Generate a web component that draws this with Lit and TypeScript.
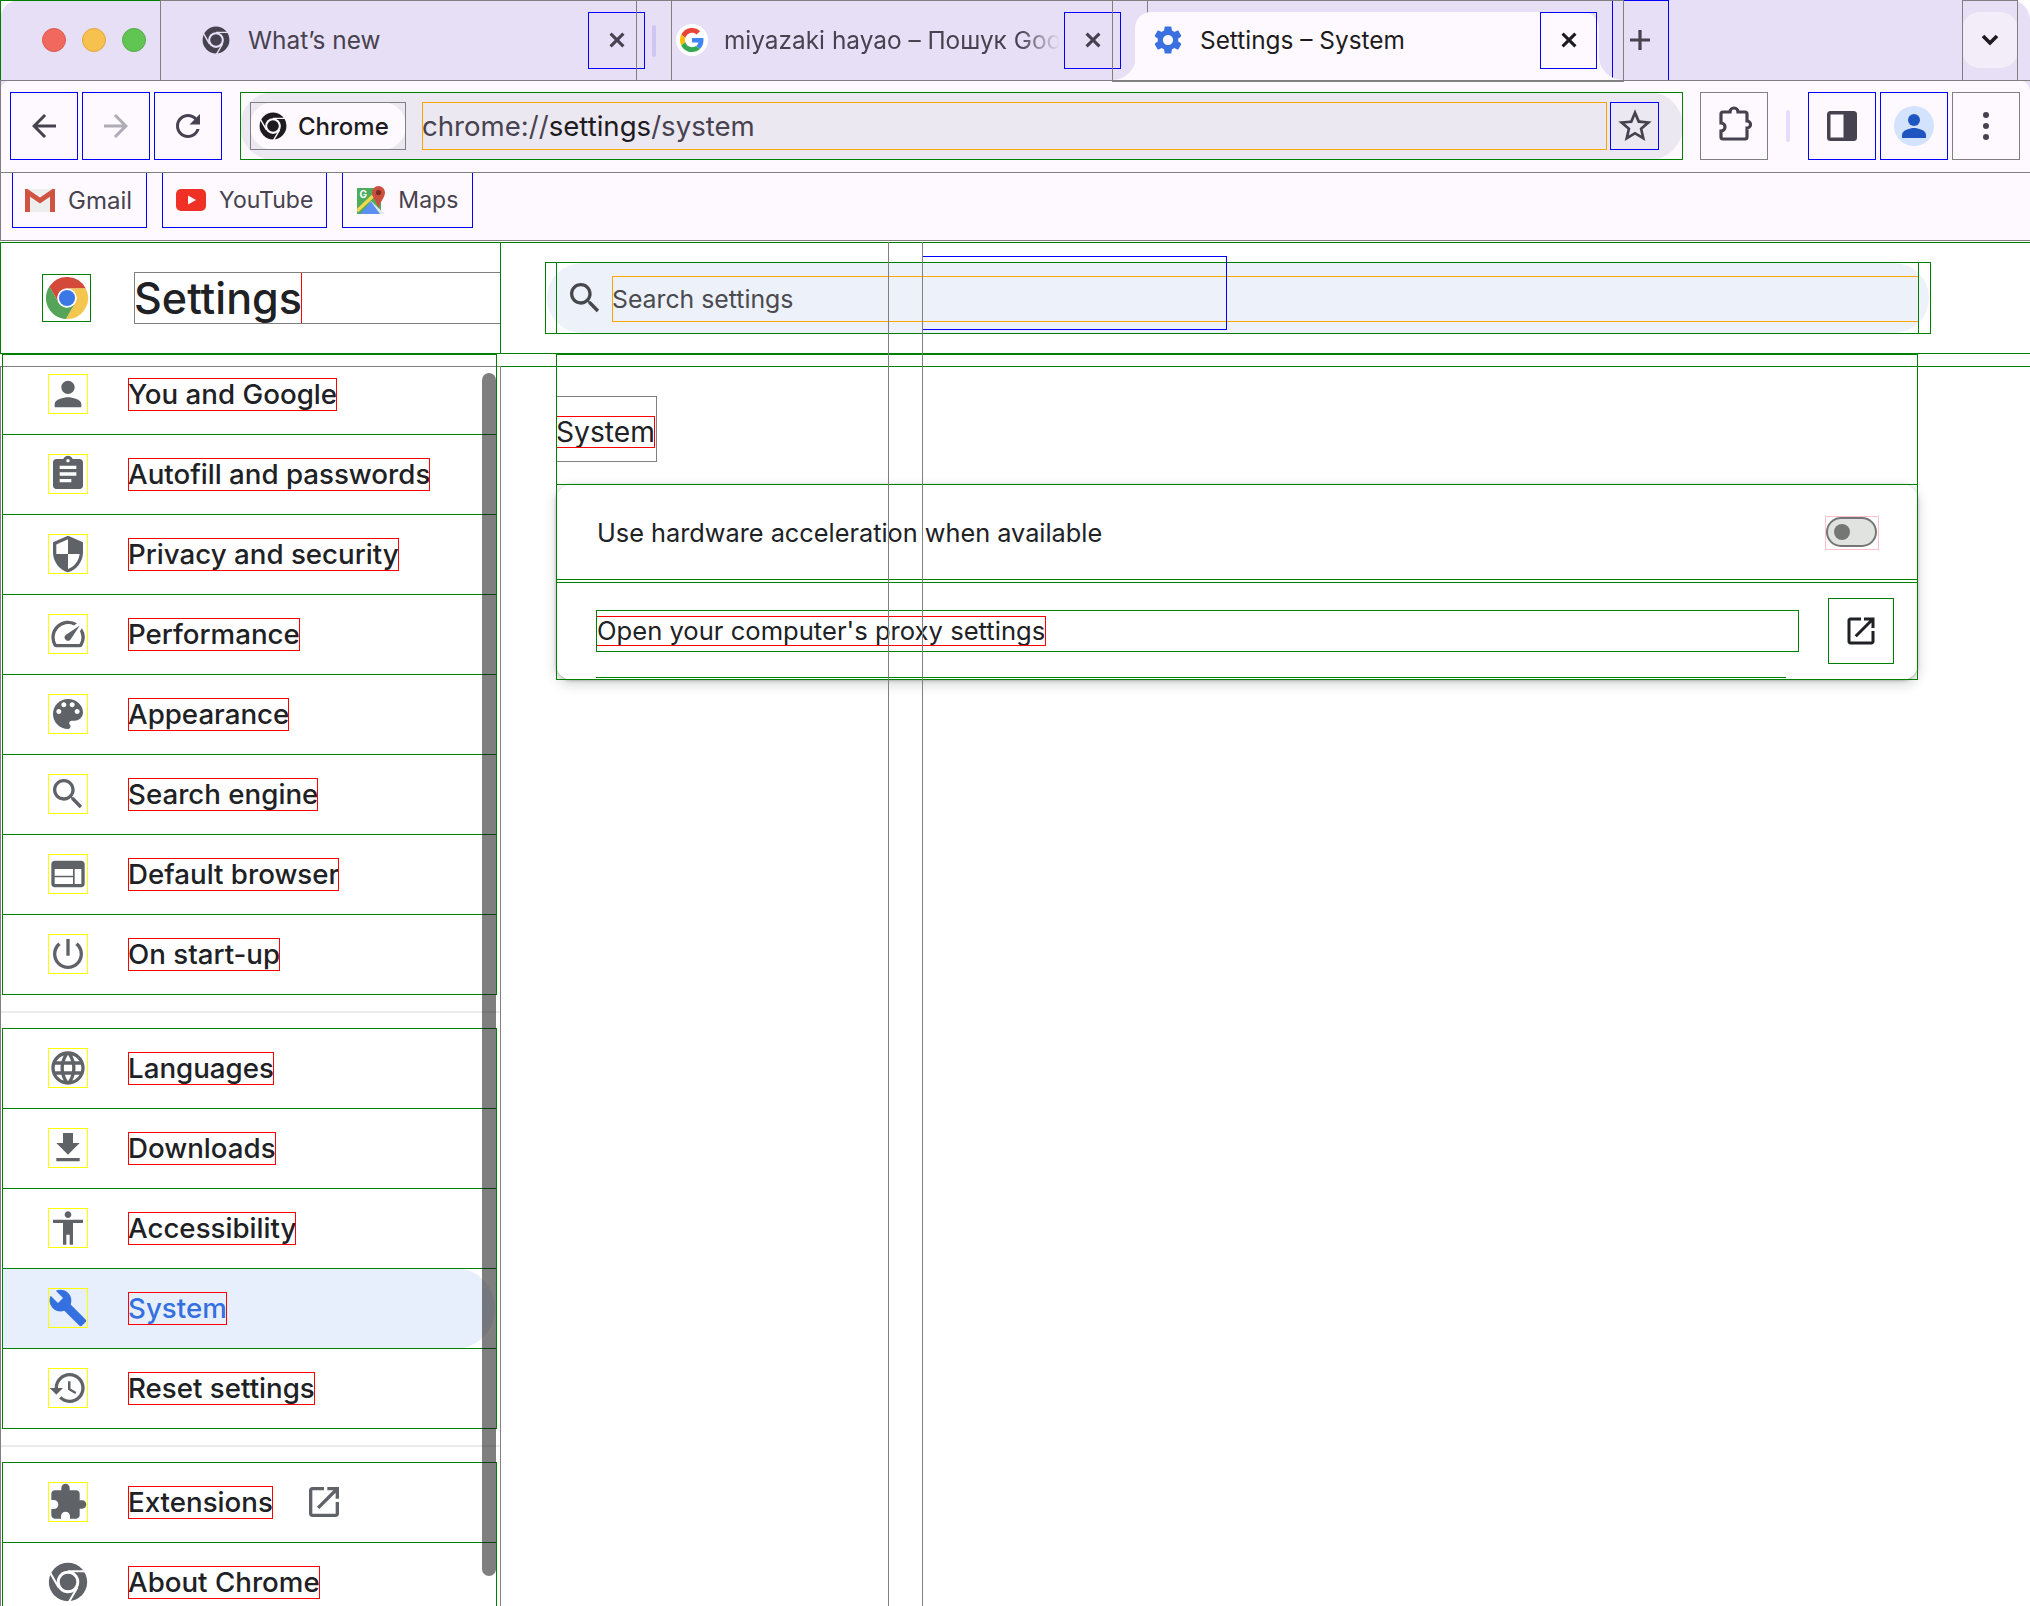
import { LitElement, html, css } from 'lit'
import { customElement } from 'lit/decorators.js'

const P = {
  person: 'M12 12c2.21 0 4-1.79 4-4s-1.79-4-4-4-4 1.79-4 4 1.79 4 4 4zm0 2c-2.67 0-8 1.34-8 4v2h16v-2c0-2.66-5.33-4-8-4z',
  assignment: 'M19 3h-4.18C14.4 1.84 13.3 1 12 1c-1.3 0-2.4.84-2.82 2H5c-1.1 0-2 .9-2 2v14c0 1.1.9 2 2 2h14c1.1 0 2-.9 2-2V5c0-1.1-.9-2-2-2zm-7 0c.55 0 1 .45 1 1s-.45 1-1 1-1-.45-1-1 .45-1 1-1zm2 14H7v-2h7v2zm3-4H7v-2h10v2zm0-4H7V7h10v2z',
  shield: 'M12 1L3 5v6c0 5.55 3.84 10.74 9 12 5.16-1.26 9-6.45 9-12V5l-9-4zm0 10.99h7c-.53 4.12-3.28 7.79-7 8.94V12H5V6.3l7-3.11v8.8z',
  speed: 'M20.38 8.57l-1.23 1.85a8 8 0 0 1-.22 7.58H5.07A8 8 0 0 1 15.58 6.85l1.85-1.23A10 10 0 0 0 3.35 19a2 2 0 0 0 1.72 1h13.85a2 2 0 0 0 1.74-1 10 10 0 0 0-.27-10.44zm-9.79 6.84a2 2 0 0 0 2.83 0l5.66-8.49-8.49 5.66a2 2 0 0 0 0 2.83z',
  palette: 'M12 3c-4.97 0-9 4.03-9 9s4.03 9 9 9c.83 0 1.5-.67 1.5-1.5 0-.39-.15-.74-.39-1.01-.23-.26-.38-.61-.38-.99 0-.83.67-1.5 1.5-1.5H16c2.76 0 5-2.24 5-5 0-4.42-4.03-8-9-8zm-5.5 9c-.83 0-1.5-.67-1.5-1.5S5.67 9 6.5 9 8 9.67 8 10.5 7.33 12 6.5 12zm3-4C8.67 8 8 7.33 8 6.5S8.67 5 9.5 5s1.5.67 1.5 1.5S10.33 8 9.5 8zm5 0c-.83 0-1.5-.67-1.5-1.5S13.67 5 14.5 5s1.5.67 1.5 1.5S15.33 8 14.5 8zm3 4c-.83 0-1.5-.67-1.5-1.5S16.67 9 17.5 9s1.5.67 1.5 1.5-.67 1.5-1.5 1.5z',
  search: 'M15.5 14h-.79l-.28-.27C15.41 12.59 16 11.11 16 9.5 16 5.91 13.09 3 9.5 3S3 5.91 3 9.5 5.91 16 9.5 16c1.61 0 3.09-.59 4.23-1.57l.27.28v.79l5 4.99L20.49 19l-4.99-5zm-6 0C7.01 14 5 11.99 5 9.5S7.01 5 9.5 5 14 7.01 14 9.5 11.99 14 9.5 14z',
  web: 'M20 4H4c-1.1 0-2 .9-2 2v12c0 1.1.9 2 2 2h16c1.1 0 2-.9 2-2V6c0-1.1-.9-2-2-2zM15 18H4v-4h11v4zm0-5H4V9h11v4zm5 5h-4V9h4v9z',
  power: 'M13 3h-2v10h2V3zm4.83 2.17l-1.42 1.42C17.99 7.86 19 9.81 19 12c0 3.87-3.13 7-7 7s-7-3.13-7-7c0-2.19 1.01-4.14 2.58-5.42L6.17 5.17C4.23 6.82 3 9.26 3 12c0 4.97 4.03 9 9 9s9-4.03 9-9c0-2.74-1.23-5.18-3.17-6.83z',
  language: 'M11.99 2C6.47 2 2 6.48 2 12s4.47 10 9.99 10C17.52 22 22 17.52 22 12S17.52 2 11.99 2zm6.93 6h-2.95c-.32-1.25-.78-2.45-1.38-3.56 1.84.63 3.37 1.91 4.33 3.56zM12 4.04c.83 1.2 1.48 2.53 1.91 3.96h-3.82c.43-1.43 1.08-2.76 1.91-3.96zM4.26 14C4.1 13.36 4 12.69 4 12s.1-1.36.26-2h3.38c-.08.66-.14 1.32-.14 2 0 .68.06 1.34.14 2H4.26zm.82 2h2.95c.32 1.25.78 2.45 1.38 3.56-1.84-.63-3.37-1.9-4.33-3.56zm2.95-8H5.08c.96-1.66 2.49-2.93 4.33-3.56C8.81 5.55 8.35 6.75 8.03 8zM12 19.96c-.83-1.2-1.48-2.53-1.91-3.96h3.82c-.43 1.43-1.08 2.76-1.91 3.96zM14.34 14H9.66c-.09-.66-.16-1.32-.16-2 0-.68.07-1.35.16-2h4.68c.09.65.16 1.32.16 2 0 .68-.07 1.34-.16 2zm.25 5.56c.6-1.11 1.06-2.31 1.38-3.56h2.95c-.96 1.65-2.49 2.93-4.33 3.56zM16.36 14c.08-.66.14-1.32.14-2 0-.68-.06-1.34-.14-2h3.38c.16.64.26 1.31.26 2s-.1 1.36-.26 2h-3.38z',
  download: 'M19 9h-4V3H9v6H5l7 7 7-7zM5 18v2h14v-2H5z',
  access: 'M12 2c1.1 0 2 .9 2 2s-.9 2-2 2-2-.9-2-2 .9-2 2-2zm9 7h-6v13h-2v-6h-2v6H9V9H3V7h18v2z',
  build: 'M22.7 19l-9.1-9.1c.9-2.3.4-5-1.5-6.9-2-2-5-2.4-7.4-1.3L9 6 6 9 1.6 4.7C.4 7.1.9 10.1 2.9 12.1c1.9 1.9 4.6 2.4 6.9 1.5l9.1 9.1c.4.4 1 .4 1.4 0l2.3-2.3c.5-.4.5-1.1.1-1.4z',
  restore: 'M13 3c-4.97 0-9 4.03-9 9H1l3.89 3.89.07.14L9 12H6c0-3.87 3.13-7 7-7s7 3.13 7 7-3.13 7-7 7c-1.93 0-3.68-.79-4.94-2.06l-1.42 1.42C8.27 19.99 10.51 21 13 21c4.97 0 9-4.03 9-9s-4.03-9-9-9zm-1 5v5l4.28 2.54.72-1.21-3.5-2.08V8H12z',
  extension: 'M20.5 11H19V7c0-1.1-.9-2-2-2h-4V3.5C13 2.12 11.88 1 10.5 1S8 2.12 8 3.5V5H4c-1.1 0-1.99.9-1.99 2v3.8H3.5c1.49 0 2.7 1.21 2.7 2.7s-1.21 2.7-2.7 2.7H2V20c0 1.1.9 2 2 2h3.8v-1.5c0-1.49 1.21-2.7 2.7-2.7 1.49 0 2.7 1.21 2.7 2.7V22H17c1.1 0 2-.9 2-2v-4h1.5c1.38 0 2.5-1.12 2.5-2.5S21.88 11 20.5 11z',
  open: 'M19 19H5V5h7V3H5c-1.11 0-2 .9-2 2v14c0 1.1.89 2 2 2h14c1.1 0 2-.9 2-2v-7h-2v7zM14 3v2h3.59l-9.83 9.83 1.41 1.41L19 6.41V10h2V3h-7z',
  back: 'M20 11H7.83l5.59-5.59L12 4l-8 8 8 8 1.41-1.41L7.83 13H20v-2z',
  forward: 'M12 4l-1.41 1.41L16.17 11H4v2h12.17l-5.58 5.59L12 20l8-8z',
  reload: 'M17.65 6.35C16.2 4.9 14.21 4 12 4c-4.42 0-7.99 3.58-7.99 8s3.57 8 7.99 8c3.73 0 6.84-2.55 7.73-6h-2.08c-.82 2.33-3.04 4-5.65 4-3.31 0-6-2.69-6-6s2.69-6 6-6c1.66 0 3.14.69 4.22 1.78L13 11h7V4l-2.35 2.35z',
  star: 'M22 9.24l-7.19-.62L12 2 9.19 8.63 2 9.24l5.46 4.73L5.82 21 12 17.27 18.18 21l-1.63-7.03L22 9.24zM12 15.4l-3.76 2.27 1-4.28-3.32-2.88 4.38-.38L12 6.1l1.71 4.04 4.38.38-3.32 2.88 1 4.28L12 15.4z',
  gear: 'M19.14 12.94c.04-.3.06-.61.06-.94 0-.32-.02-.64-.07-.94l2.03-1.58c.18-.14.23-.41.12-.61l-1.92-3.32c-.12-.22-.37-.29-.59-.22l-2.39.96c-.5-.38-1.03-.7-1.62-.94l-.36-2.54c-.04-.24-.24-.41-.48-.41h-3.84c-.24 0-.43.17-.47.41l-.36 2.54c-.59.24-1.13.57-1.62.94l-2.39-.96c-.22-.08-.47 0-.59.22L2.74 8.87c-.12.21-.08.47.12.61l2.03 1.58c-.05.3-.09.63-.09.94s.02.64.07.94l-2.03 1.58c-.18.14-.23.41-.12.61l1.92 3.32c.12.22.37.29.59.22l2.39-.96c.5.38 1.03.7 1.62.94l.36 2.54c.05.24.24.41.48.41h3.84c.24 0 .44-.17.47-.41l.36-2.54c.59-.24 1.13-.56 1.62-.94l2.39.96c.22.08.47 0 .59-.22l1.92-3.32c.12-.22.07-.47-.12-.61l-2.01-1.58zM12 15.6c-1.98 0-3.6-1.62-3.6-3.6s1.62-3.6 3.6-3.6 3.6 1.62 3.6 3.6-1.62 3.6-3.6 3.6z',
}

const NAV_GROUPS: { icon: string; label: string; active?: boolean; external?: boolean; chrome?: boolean }[][] = [
  [
    { icon: P.person, label: 'You and Google' },
    { icon: P.assignment, label: 'Autofill and passwords' },
    { icon: P.shield, label: 'Privacy and security' },
    { icon: P.speed, label: 'Performance' },
    { icon: P.palette, label: 'Appearance' },
    { icon: P.search, label: 'Search engine' },
    { icon: P.web, label: 'Default browser' },
    { icon: P.power, label: 'On start-up' },
  ],
  [
    { icon: P.language, label: 'Languages' },
    { icon: P.download, label: 'Downloads' },
    { icon: P.access, label: 'Accessibility' },
    { icon: P.build, label: 'System', active: true },
    { icon: P.restore, label: 'Reset settings' },
  ],
  [
    { icon: P.extension, label: 'Extensions', external: true },
    { icon: '', label: 'About Chrome', chrome: true },
  ],
]

const mat = (d: string, cls = '') => html`<svg class="mat ${cls}" viewBox="0 0 24 24"><path d=${d}></path></svg>`

// mono chrome logo, gap is whatever colour sits behind it
const chromeLogo = (size: number, fill: string, gap: string) => html`
  <svg width=${size} height=${size} viewBox="0 0 48 48">
    <circle cx="24" cy="24" r="23" fill=${fill}></circle>
    <path d="M24 11H48M35.26 30.5L22.76 52M12.74 30.5L0.24 8.85" stroke=${gap} stroke-width="2.4" fill="none"></path>
    <circle cx="24" cy="24" r="13.5" fill=${gap}></circle>
    <circle cx="24" cy="24" r="10" fill=${fill}></circle>
  </svg>`

const colorChrome = html`
  <svg width="46" height="46" viewBox="0 0 48 48">
    <path fill="#d34a3a" d="M43.6 14A22 22 0 0 0 5.54 12.03L15.34 29A10 10 0 0 1 24 14Z"></path>
    <path fill="#f5c64e" d="M22.86 45.97A22 22 0 0 0 43.6 14L24 14A10 10 0 0 1 32.66 29Z"></path>
    <path fill="#56a45a" d="M5.54 12.03A22 22 0 0 0 22.86 45.97L32.66 29A10 10 0 0 1 15.34 29Z"></path>
    <circle cx="24" cy="24" r="10" fill="#fff"></circle>
    <circle cx="24" cy="24" r="8.4" fill="#3b78e7"></circle>
  </svg>`

const googleG = html`
  <svg width="24" height="24" viewBox="0 0 48 48">
    <path fill="#EA4335" d="M24 9.5c3.54 0 6.71 1.22 9.21 3.6l6.85-6.85C35.9 2.38 30.47 0 24 0 14.62 0 6.51 5.38 2.56 13.22l7.98 6.19C12.43 13.72 17.74 9.5 24 9.5z"></path>
    <path fill="#4285F4" d="M46.98 24.55c0-1.57-.15-3.09-.38-4.55H24v9.02h12.94c-.58 2.96-2.26 5.48-4.78 7.18l7.73 6c4.51-4.18 7.09-10.36 7.09-17.65z"></path>
    <path fill="#FBBC05" d="M10.53 28.59c-.48-1.45-.76-2.99-.76-4.59s.27-3.14.76-4.59l-7.98-6.19C.92 16.46 0 20.12 0 24c0 3.88.92 7.54 2.56 10.78l7.97-6.19z"></path>
    <path fill="#34A853" d="M24 48c6.48 0 11.93-2.13 15.89-5.81l-7.73-6c-2.15 1.45-4.92 2.3-8.16 2.3-6.26 0-11.57-4.22-13.47-9.91l-7.98 6.19C6.51 42.62 14.62 48 24 48z"></path>
  </svg>`

const closeIcon = html`<svg class="close-x" viewBox="0 0 24 24"><path d="M5 5L19 19M19 5L5 19"></path></svg>`

@customElement('app-root')
export class AppRoot extends LitElement {
  static styles = css`
    :host {
      display: block;
      width: 2030px;
      height: 1606px;
      overflow: hidden;
      position: relative;
      background: #fff;
      font-family: Inter, 'Noto Sans', sans-serif;
      color: #202124;
    }

    * { box-sizing: border-box; }

    .o-green { outline: 1px solid #008000; outline-offset: -1px; }
    .o-red { outline: 1px solid #ff0000; outline-offset: -1px; }
    .o-blue { outline: 1px solid #0000ff; outline-offset: -1px; }
    .o-gray { outline: 1px solid #808080; outline-offset: -1px; }
    .o-orange { outline: 1px solid #ffa500; outline-offset: -1px; }
    .o-yellow { outline: 1px solid #ffff00; outline-offset: -1px; }

    .mat { display: block; fill: currentColor; }

    /* tab strip */
    .tabbar {
      display: flex;
      height: 80px;
      background: #e7dff5;
      border-radius: 20px 20px 0 0;
      position: relative;
      color: #47424f;
    }

    .lights {
      display: flex;
      align-items: center;
      gap: 16px;
      flex: none;
      width: 161px;
      height: 82px;
      margin-right: -1px;
      padding: 0 0 2px 42px;
    }

    .light { width: 24px; height: 24px; border-radius: 50%; }
    .light.r { background: #f0685e; border: 1px solid #de5a50; }
    .light.y { background: #f6c14f; border: 1px solid #dfa93c; }
    .light.g { background: #61c554; border: 1px solid #52ac46; }

    .tab {
      position: relative;
      display: flex;
      align-items: center;
      flex: none;
      width: 512px;
      height: 82px;
      margin-right: -36px;
      padding: 0 27px 2px 42px;
      font-size: 24.4px;
    }

    .tab .ico {
      display: flex;
      align-items: center;
      justify-content: center;
      flex: none;
      width: 28px;
      height: 34px;
      margin-right: 18px;
      position: relative;
    }

    .tab .ico .mat { width: 34px; height: 34px; flex: none; color: #3a70e0; }

    .g-badge {
      display: flex;
      align-items: center;
      justify-content: center;
      flex: none;
      width: 32px;
      height: 32px;
      border-radius: 50%;
      background: #fff;
    }

    .tab .title {
      flex: 1;
      min-width: 0;
      white-space: nowrap;
      overflow: hidden;
      line-height: 34px;
    }

    .tab.fade .title {
      -webkit-mask-image: linear-gradient(90deg, #000 88%, transparent);
      mask-image: linear-gradient(90deg, #000 88%, transparent);
    }

    .tab.current { color: #1d1b20; z-index: 1; }

    /* rounded tab body with the flared foot on each side */
    .tab.current::before {
      content: '';
      position: absolute;
      z-index: -1;
      left: 23px;
      right: 25px;
      top: 12px;
      bottom: 2px;
      background: #fdf9ff;
      border-radius: 16px 16px 0 0;
    }

    .foot {
      position: absolute;
      z-index: -1;
      bottom: 2px;
      width: 24px;
      height: 24px;
      overflow: hidden;
    }

    .foot::after {
      content: '';
      position: absolute;
      top: -24px;
      width: 48px;
      height: 48px;
      border-radius: 50%;
      box-shadow: 0 0 0 40px #fdf9ff;
    }

    .foot.l { left: 0; }
    .foot.l::after { left: -24px; }
    .foot.r { right: 1px; }
    .foot.r::after { right: -24px; }

    .tab-close {
      display: flex;
      align-items: center;
      justify-content: center;
      flex: none;
      width: 57px;
      height: 57px;
      margin-left: 4px;
    }

    .close-x {
      width: 22px;
      height: 22px;
      fill: none;
      stroke: currentColor;
      stroke-width: 3.4;
    }

    .tab-sep {
      position: absolute;
      right: 16px;
      top: 25px;
      width: 4px;
      height: 32px;
      border-radius: 2px;
      background: #cfc6f5;
    }

    .new-tab {
      display: flex;
      align-items: center;
      justify-content: center;
      flex: none;
      width: 57px;
      height: 82px;
      margin-left: 23.5px;
      padding-bottom: 2px;
    }

    .tab-menu {
      flex: none;
      width: 56px;
      height: 82px;
      margin-left: auto;
      margin-right: 12px;
      padding: 12px 0 14px;
    }

    .tab-menu div {
      display: flex;
      align-items: center;
      justify-content: center;
      height: 100%;
      border-radius: 18px;
      background: #f2edf9;
      color: #1d1b20;
    }

    /* toolbar */
    .toolbar {
      position: relative;
      isolation: isolate;
      display: flex;
      width: 2040px;
      height: 93px;
      margin-bottom: -1px;
      padding: 12px 10px 13px 10px;
      background: #e7dff5;
      color: #47424f;
    }

    .toolbar::before {
      content: '';
      position: absolute;
      inset: 0 10px 0 0;
      z-index: -1;
      background: #fdf9ff;
      border-radius: 12px 12px 0 0;
    }

    .tool {
      display: flex;
      align-items: center;
      justify-content: center;
      flex: none;
      width: 68px;
      height: 68px;
      margin-right: 4px;
    }

    .tool .mat { width: 36px; height: 36px; }
    .tool.dim { color: #b0acb5; }

    .omni {
      flex: none;
      width: 1443px;
      height: 68px;
      margin-left: 14px;
      margin-right: 17px;
    }

    .omni-pill {
      display: flex;
      align-items: center;
      height: 100%;
      padding: 0 24px 0 10px;
      background: #ece8f1;
      border-radius: 34px;
    }

    .chip {
      flex: none;
      width: 156px;
      height: 48px;
      margin-right: 16px;
    }

    .chip-pill {
      display: flex;
      align-items: center;
      height: 100%;
      padding-left: 9px;
      background: #fdf9ff;
      border-radius: 24px;
      color: #1d1b20;
      font-size: 24px;
      font-weight: 500;
    }

    .chip-pill svg { margin-right: 11px; flex: none; }

    .url {
      flex: 1;
      height: 48px;
      line-height: 49px;
      font-size: 27.6px;
      white-space: nowrap;
    }

    .url b { font-weight: 400; color: #1d1b20; }

    .star {
      display: flex;
      align-items: center;
      justify-content: center;
      flex: none;
      width: 49px;
      height: 48px;
      margin-left: 3px;
    }

    .star .mat { width: 40px; height: 40px; }

    .tool-sep {
      flex: none;
      width: 4px;
      height: 32px;
      margin: 18px 18px 0 14px;
      border-radius: 2px;
      background: #e3dffa;
    }

    .avatar { display: block; }

    /* bookmarks */
    .bookmarks {
      display: flex;
      gap: 15px;
      width: 2040px;
      height: 69px;
      padding-left: 12px;
      background: #fdf9ff;
      color: #47424f;
      font-size: 23px;
    }

    .mark {
      display: flex;
      align-items: center;
      gap: 13px;
      height: 56px;
      padding: 0 14px 0 14px;
    }

    .mark.gmail { font-size: 24px; padding: 0 15px 0 13px; }
    .mark.maps { padding: 0 15px 0 15px; }
    .mark svg { flex: none; }

    /* settings page */
    .page-head {
      position: relative;
      display: flex;
      align-items: center;
      width: 2040px;
      height: 112px;
      margin-top: 1px;
    }

    .side-head {
      display: flex;
      align-items: center;
      flex: none;
      width: 501px;
      height: 100%;
      padding-left: 42px;
    }

    .logo {
      display: flex;
      align-items: center;
      justify-content: center;
      flex: none;
      width: 49px;
      height: 48px;
      margin-right: 43px;
    }

    .head-title { flex: 1; height: 52px; }

    .head-title span {
      display: inline-block;
      height: 52px;
      line-height: 52px;
      font-size: 43.1px;
      font-weight: 500;
    }

    /* the pill is a little wider than the row that sits on it */
    .search {
      position: relative;
      isolation: isolate;
      flex: none;
      width: 1386px;
      height: 72px;
      margin-left: 44px;
      padding: 0 12px 0 11px;
    }

    .search::before {
      content: '';
      position: absolute;
      inset: 1px 2px;
      z-index: -1;
      background: #edf1f9;
      border-radius: 35px;
    }

    .search-row {
      display: flex;
      align-items: center;
      height: 100%;
      padding-left: 9px;
      color: #47484d;
    }

    .search-row .mat { width: 40px; height: 40px; flex: none; margin-right: 7px; }

    .search-input {
      flex: 1;
      height: 46px;
      margin-top: 2px;
      line-height: 46px;
      font-size: 24.8px;
      color: #4a4a4f;
    }

    .search-box-overlay {
      position: absolute;
      left: 922px;
      top: 14px;
      width: 305px;
      height: 74px;
    }

    .layout {
      position: relative;
      display: flex;
      width: 2040px;
      height: 1300px;
      margin-top: 12px;
    }

    .sidebar {
      position: relative;
      flex: none;
      width: 501px;
      height: 100%;
    }

    .nav { margin-top: -12px; }

    .nav-group {
      display: flow-root;
      width: 495px;
      margin-left: 2px;
      padding-bottom: 1px;
    }

    /* neighbouring rows share one line */
    .nav-row {
      position: relative;
      isolation: isolate;
      display: flex;
      align-items: center;
      height: 81px;
      margin-bottom: -1px;
      padding: 0 0 1px 46px;
      font-size: 27.7px;
      font-weight: 500;
    }

    .nav-row.active { color: #3570e0; }

    .nav-row.active::before {
      content: '';
      position: absolute;
      inset: 0 2px 0 0;
      z-index: -1;
      background: #e8effc;
      border-radius: 0 40px 40px 0;
    }

    .nav-ico {
      flex: none;
      width: 40px;
      height: 40px;
      margin-right: 40px;
      color: #5f6368;
    }

    .nav-row.active .nav-ico { color: #3570e0; }
    .nav-ico .mat { width: 40px; height: 40px; }

    .nav-label {
      display: inline-block;
      height: 33px;
      line-height: 33px;
      white-space: nowrap;
    }

    .ext {
      width: 40px;
      height: 40px;
      margin-left: 31px;
      color: #5f6368;
    }

    .nav-sep {
      height: 2px;
      margin: 16px 0 15px;
      background: #ebebeb;
    }

    .scrollbar {
      position: absolute;
      left: 482px;
      top: 7px;
      width: 14px;
      height: 1203px;
      border-radius: 7px;
      background: rgba(0, 0, 0, 0.5);
    }

    .main {
      flex: none;
      width: 1362px;
      height: 326px;
      margin-left: 55px;
      margin-top: -12px;
      padding-top: 42px;
    }

    .main-title {
      display: flex;
      align-items: center;
      width: 101px;
      height: 66px;
      padding-top: 6px;
    }

    .main-title span {
      display: block;
      height: 32px;
      line-height: 32px;
      font-size: 28.2px;
      white-space: nowrap;
    }

    .card-frame { height: 196px; margin-top: 22px; }

    .card {
      height: 100%;
      background: #fff;
      border-radius: 16px;
      box-shadow: 0 1px 3px rgba(60, 64, 67, 0.35), 0 4px 10px 3px rgba(60, 64, 67, 0.15);
      font-size: 25.3px;
    }

    .row-top {
      display: flex;
      align-items: center;
      justify-content: space-between;
      height: 96px;
      margin-bottom: 2px;
      padding: 0 39px 0 41px;
    }

    .toggle {
      flex: none;
      width: 54px;
      height: 34px;
      margin-top: 2px;
      padding: 1px;
      outline: 1px solid #ffc0cb;
      outline-offset: -1px;
    }

    .toggle-track {
      display: flex;
      align-items: center;
      width: 51px;
      height: 30px;
      padding-left: 6px;
      border: 2px solid #747775;
      border-radius: 15px;
      background: #e1e3e1;
    }

    .toggle-knob {
      width: 16px;
      height: 16px;
      border-radius: 50%;
      background: #747775;
    }

    .row-bottom { height: 98px; padding-left: 40px; }

    .proxy {
      display: flex;
      align-items: center;
      width: 1190px;
      height: 96px;
      padding-top: 2px;
      border-bottom: 1px solid #008000;
    }

    .proxy-label {
      display: flex;
      align-items: center;
      flex: none;
      width: 1203px;
      height: 42px;
    }

    .proxy-label span {
      display: block;
      height: 30px;
      line-height: 30px;
      padding: 0 1px;
      font-size: 25.6px;
      white-space: nowrap;
    }

    .open-btn {
      display: flex;
      align-items: center;
      justify-content: center;
      flex: none;
      width: 66px;
      height: 66px;
      margin-left: 29px;
      color: #202124;
    }

    .open-btn .mat { width: 36px; height: 36px; }

    /* inspector guide lines drawn over the page */
    .guide {
      position: absolute;
      top: 242px;
      bottom: 0;
      width: 1px;
      background: #808080;
    }
    .guide.a { left: 888px; }
    .guide.b { left: 922px; }
  `

  private renderNavRow(row: typeof NAV_GROUPS[number][number]) {
    return html`
      <div class="nav-row o-green ${row.active ? 'active' : ''}">
        <div class="nav-ico ${row.chrome ? '' : 'o-yellow'}">
          ${row.chrome ? chromeLogo(40, '#5f6368', '#fff') : mat(row.icon)}
        </div>
        <span class="nav-label o-red">${row.label}</span>
        ${row.external ? mat(P.open, 'ext') : ''}
      </div>
    `
  }

  render() {
    return html`
      <div class="tabbar">
        <div class="lights o-green">
          <div class="light r"></div>
          <div class="light y"></div>
          <div class="light g"></div>
        </div>
        <div class="tab o-gray">
          <div class="ico">${chromeLogo(28, '#47424f', '#e7dff5')}</div>
          <div class="title">What’s new</div>
          <div class="tab-close o-blue">${closeIcon}</div>
          <div class="tab-sep"></div>
        </div>
        <div class="tab fade o-gray">
          <div class="ico"><div class="g-badge">${googleG}</div></div>
          <div class="title">miyazaki hayao – Пошук Google</div>
          <div class="tab-close o-blue">${closeIcon}</div>
        </div>
        <div class="tab current o-gray">
          <div class="foot l"></div>
          <div class="foot r"></div>
          <div class="ico">${mat(P.gear)}</div>
          <div class="title">Settings – System</div>
          <div class="tab-close o-blue">${closeIcon}</div>
        </div>
        <div class="new-tab o-blue">
          <svg width="24" height="24" viewBox="0 0 24 24"><path d="M12 2V22M2 12H22" stroke="#47424f" stroke-width="3.2" fill="none"></path></svg>
        </div>
        <div class="tab-menu o-gray">
          <div>
            <svg width="20" height="14" viewBox="0 0 20 14"><path d="M3 3L10 10L17 3" stroke="currentColor" stroke-width="3.6" fill="none"></path></svg>
          </div>
        </div>
      </div>

      <div class="toolbar o-gray">
        <div class="tool o-blue">${mat(P.back)}</div>
        <div class="tool dim o-blue">${mat(P.forward)}</div>
        <div class="tool o-blue">${mat(P.reload)}</div>
        <div class="omni o-green">
          <div class="omni-pill">
            <div class="chip o-gray">
              <div class="chip-pill">${chromeLogo(28, '#1d1b20', '#fdf9ff')}Chrome</div>
            </div>
            <div class="url o-orange">chrome://<b>settings</b>/system</div>
            <div class="star o-blue">${mat(P.star)}</div>
          </div>
        </div>
        <div class="tool o-gray">
          <svg width="36" height="38" viewBox="0 0 36 38" style="margin-top:-5px">
            <path d="M5 9a2 2 0 0 1 2-2h7a4 4 0 0 1 8 0h7a2 2 0 0 1 2 2v7a3 3 0 0 1 0 7v9a2 2 0 0 1-2 2H7a2 2 0 0 1-2-2v-6a4 4 0 0 0 0-8z" fill="none" stroke="#47424f" stroke-width="3.2"></path>
          </svg>
        </div>
        <div class="tool-sep"></div>
        <div class="tool o-blue">
          <svg width="30" height="30" viewBox="0 0 30 30">
            <rect width="30" height="30" rx="3.5" fill="#47424f"></rect>
            <rect x="3.5" y="3.5" width="13" height="23" fill="#fdf9ff"></rect>
          </svg>
        </div>
        <div class="tool o-blue">
          <svg class="avatar" width="40" height="40" viewBox="0 0 40 40">
            <circle cx="20" cy="20" r="20" fill="#d3e3fd"></circle>
            <circle cx="20" cy="14" r="6" fill="#1f55c0"></circle>
            <path d="M8 32v-3c0-5 8-7 12-7s12 2 12 7v3z" fill="#1f55c0"></path>
          </svg>
        </div>
        <div class="tool o-gray">
          <svg width="8" height="30" viewBox="0 0 8 30">
            <circle cx="4" cy="4" r="3" fill="#47424f"></circle>
            <circle cx="4" cy="15" r="3" fill="#47424f"></circle>
            <circle cx="4" cy="26" r="3" fill="#47424f"></circle>
          </svg>
        </div>
      </div>

      <div class="bookmarks o-gray">
        <div class="mark gmail o-blue">
          <svg width="30" height="23" viewBox="0 0 30 23">
            <rect x="2" width="26" height="23" rx="2" fill="#eeeeee"></rect>
            <path d="M2.5 23V3L15 11.5L27.5 3V23" fill="none" stroke="#d05243" stroke-width="5"></path>
          </svg>
          Gmail
        </div>
        <div class="mark o-blue">
          <svg width="30" height="22" viewBox="0 0 30 22">
            <rect width="30" height="22" rx="5" fill="#ee3124"></rect>
            <path d="M12 6.5L20 11L12 15.5z" fill="#fff"></path>
          </svg>
          YouTube
        </div>
        <div class="mark maps o-blue">
          <svg width="28" height="28" viewBox="0 0 28 28">
            <path d="M0 2H24V28H0z" fill="#4dac5d"></path>
            <path d="M14 15L28 28H6z" fill="#e3e6e8"></path>
            <path d="M3 28L14 15.5L23 28z" fill="#5b8ff0"></path>
            <path d="M0 25L16 10" stroke="#f4d84f" stroke-width="3.4"></path>
            <text x="2.5" y="12" font-size="10" font-weight="700" fill="#fff">G</text>
            <path d="M21.5 0a6.5 6.5 0 0 1 6.5 6.5c0 5-5 9-6.5 16c-1.5-7-6.5-11-6.5-16a6.5 6.5 0 0 1 6.5-6.5z" fill="#cb4f3f"></path>
            <circle cx="21.5" cy="6.5" r="2.6" fill="#7e2a20"></circle>
          </svg>
          Maps
        </div>
      </div>

      <div class="page-head o-green">
        <div class="side-head o-green">
          <div class="logo o-green">${colorChrome}</div>
          <div class="head-title o-gray"><span class="o-red">Settings</span></div>
        </div>
        <div class="search o-green">
          <div class="search-row o-green">
            ${mat(P.search)}
            <div class="search-input o-orange">Search settings</div>
          </div>
        </div>
        <div class="search-box-overlay o-blue"></div>
      </div>

      <div class="layout o-green">
        <div class="sidebar o-gray">
          <div class="nav">
            ${NAV_GROUPS.map((group, i) => html`
              ${i > 0 ? html`<div class="nav-sep"></div>` : ''}
              <div class="nav-group o-green">${group.map((row) => this.renderNavRow(row))}</div>
            `)}
          </div>
          <div class="scrollbar"></div>
        </div>
        <div class="main o-green">
          <div class="main-title o-gray"><span class="o-red">System</span></div>
          <div class="card-frame o-green">
            <div class="card">
              <div class="row-top o-green">
                <span>Use hardware acceleration when available</span>
                <div class="toggle"><div class="toggle-track"><div class="toggle-knob"></div></div></div>
              </div>
              <div class="row-bottom o-green">
                <div class="proxy">
                  <div class="proxy-label o-green"><span class="o-red">Open your computer's proxy settings</span></div>
                  <div class="open-btn o-green">${mat(P.open)}</div>
                </div>
              </div>
            </div>
          </div>
        </div>
      </div>

      <div class="guide a"></div>
      <div class="guide b"></div>
    `
  }
}
